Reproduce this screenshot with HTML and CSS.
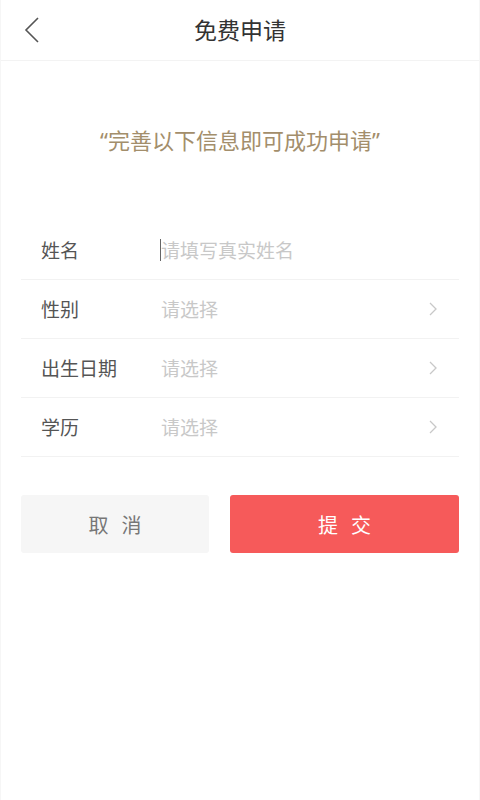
FILE: index.html
```html
<!DOCTYPE html>
<html lang="zh-CN">
<head>
<meta charset="utf-8">
<link rel="stylesheet" href="styles.css">
</head>
<body>
<div class="page">
  <header class="header">
    <span class="back">
      <svg width="16" height="28" viewBox="0 0 16 28"><path d="M14 2 L2 14 L14 26" fill="none" stroke="#555" stroke-width="1.6"/></svg>
    </span>
    <h1 class="title">免费申请</h1>
  </header>
  <p class="slogan">“完善以下信息即可成功申请”</p>
  <div class="form">
    <div class="row">
      <span class="label">姓名</span>
      <span class="value"><span class="cursor"></span>请填写真实姓名</span>
    </div>
    <div class="row">
      <span class="label">性别</span>
      <span class="value">请选择</span>
      <span class="arrow"><svg width="8" height="14" viewBox="0 0 8 14"><path d="M1 1 L7 7 L1 13" fill="none" stroke="#c8c8c8" stroke-width="1.3"/></svg></span>
    </div>
    <div class="row">
      <span class="label">出生日期</span>
      <span class="value">请选择</span>
      <span class="arrow"><svg width="8" height="14" viewBox="0 0 8 14"><path d="M1 1 L7 7 L1 13" fill="none" stroke="#c8c8c8" stroke-width="1.3"/></svg></span>
    </div>
    <div class="row">
      <span class="label">学历</span>
      <span class="value">请选择</span>
      <span class="arrow"><svg width="8" height="14" viewBox="0 0 8 14"><path d="M1 1 L7 7 L1 13" fill="none" stroke="#c8c8c8" stroke-width="1.3"/></svg></span>
    </div>
  </div>
  <div class="actions">
    <button class="btn cancel">取 消</button>
    <button class="btn submit">提 交</button>
  </div>
</div>
</body>
</html>
```
FILE: styles.css
```css
html, body {
  margin: 0;
  padding: 0;
  background: #fff;
}
.page {
  width: 480px;
  height: 800px;
  box-sizing: border-box;
  border-left: 1px solid #f6f6f6;
  border-right: 1px solid #f6f6f6;
  font-family: "Noto Sans", "Noto Sans CJK SC", sans-serif;
}
.header {
  height: 60px;
  border-bottom: 1px solid #f3f3f3;
  display: flex;
  align-items: center;
  justify-content: center;
  position: relative;
}
.back {
  position: absolute;
  left: 23px;
  top: 16px;
  display: flex;
}
.title {
  margin: 0;
  font-size: 23px;
  font-weight: normal;
  color: #333;
  line-height: 1;
}
.slogan {
  margin: 65px 0 0;
  text-align: center;
  font-size: 22px;
  line-height: 28px;
  color: #a38e6b;
}
.form {
  margin: 67px 20px 0;
}
.row {
  height: 58px;
  border-bottom: 1px solid #f2f2f2;
  display: flex;
  align-items: center;
  padding: 0 20px;
}
.label {
  width: 120px;
  font-size: 19px;
  color: #555;
}
.value {
  flex: 1;
  font-size: 19px;
  color: #c8c8c8;
  display: flex;
  align-items: center;
}
.cursor {
  width: 1px;
  height: 22px;
  background: #666;
  margin-left: -1px;
}
.arrow {
  display: flex;
  margin-right: 2px;
}
.actions {
  margin: 38px 20px 0;
  display: flex;
  gap: 21px;
}
.btn {
  height: 58px;
  border: none;
  border-radius: 3px;
  font-family: "Noto Sans", "Noto Sans CJK SC", sans-serif;
  font-size: 20px;
  letter-spacing: 4px;
  text-indent: 4px;
  padding: 0;
}
.cancel {
  width: 188px;
  background: #f6f6f6;
  color: #777;
}
.submit {
  flex: 1;
  background: #f65a5a;
  color: #fff;
}
```
